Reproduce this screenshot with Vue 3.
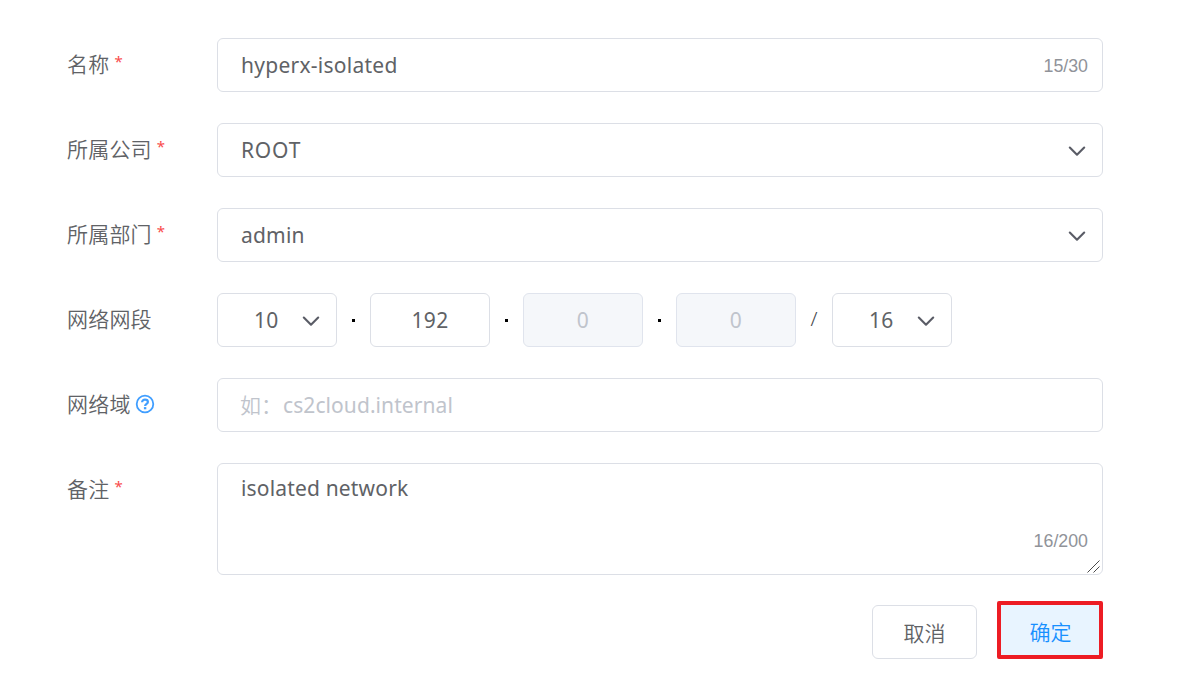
<script setup>
const octets = [
  { value: '10', select: true, sep: '.' },
  { value: '192', sep: '.' },
  { value: '0', disabled: true, sep: '.' },
  { value: '0', disabled: true, sep: '/' },
  { value: '16', select: true },
]
</script>

<template>
  <form class="form" @submit.prevent>
    <div class="row">
      <div class="label">名称<span class="req">*</span></div>
      <div class="field"><span class="value name">hyperx-isolated</span><span class="count">15/30</span></div>
    </div>
    <div class="row">
      <div class="label">所属公司<span class="req">*</span></div>
      <div class="field">
        <span class="value root">ROOT</span>
        <svg class="chevron" viewBox="0 0 18 12"><path d="M1.8 2.5 9 9.7 16.2 2.5" /></svg>
      </div>
    </div>
    <div class="row">
      <div class="label">所属部门<span class="req">*</span></div>
      <div class="field">
        <span class="value admin">admin</span>
        <svg class="chevron" viewBox="0 0 18 12"><path d="M1.8 2.5 9 9.7 16.2 2.5" /></svg>
      </div>
    </div>
    <div class="row">
      <div class="label">网络网段</div>
      <div class="segments">
        <template v-for="(o, i) in octets" :key="i">
          <div class="octet" :class="{ disabled: o.disabled, select: o.select }">
            <span class="value num">{{ o.value }}</span>
            <svg v-if="o.select" class="chevron" viewBox="0 0 18 12"><path d="M1.8 2.5 9 9.7 16.2 2.5" /></svg>
          </div>
          <span v-if="o.sep === '.'" class="dot"><i></i></span>
          <span v-else-if="o.sep" class="slash">/</span>
        </template>
      </div>
    </div>
    <div class="row">
      <div class="label">网络域
        <svg class="help" viewBox="0 0 20 20">
          <circle cx="10" cy="10" r="8.3" />
          <path class="hook" d="M7.1 8.2C7.1 6.5 8.4 5.7 10 5.7s2.9.9 2.9 2.3c0 1.8-2.8 1.9-2.8 3.9" />
          <rect x="8.9" y="13.1" width="2.4" height="2.2" />
        </svg>
      </div>
      <div class="field placeholder"><span class="ru">如：</span><span class="value domain">cs2cloud.internal</span></div>
    </div>
    <div class="row area-row">
      <div class="label">备注<span class="req">*</span></div>
      <div class="field area">
        <span class="value note">isolated network</span>
        <span class="count">16/200</span>
        <svg class="grip" viewBox="0 0 13 13"><path d="M.5 12.5 12.5.5M6.5 12.5l6-6" /></svg>
      </div>
    </div>
    <div class="actions">
      <button class="btn cancel" type="button">取消</button>
      <button class="btn ok" type="button">确定</button>
    </div>
  </form>
</template>

<style>
body { background: #fff; }
</style>

<style scoped>
.form {
  box-sizing: border-box;
  width: 1182px;
  height: 680px;
  padding: 38px 79px 0 67px;
  overflow: hidden;
  font-family: "Noto Sans", "Noto Sans CJK SC", sans-serif;
  font-size: 21px;
  color: #606266;
}
.form * { box-sizing: border-box; }
.row { display: flex; height: 54px; margin-bottom: 31px; }
.label {
  display: flex;
  align-items: center;
  width: 150px;
  height: 50px;
  line-height: 30px;
  white-space: nowrap;
  font-family: "Noto Sans CJK SC DemiLight", "Noto Sans CJK SC", sans-serif;
  font-weight: 350;
  letter-spacing: 0.2px;
}
.req {
  margin: -4px 0 0 5px;
  color: #f94b4b;
  font-family: "Noto Sans", sans-serif;
  font-weight: 400;
  font-size: 15px;
}
.field {
  display: flex;
  align-items: center;
  justify-content: space-between;
  width: 886px;
  height: 54px;
  padding: 0 14px 0 23px;
  border: 1px solid #dcdfe6;
  border-radius: 6px;
}
.value { line-height: 30px; white-space: nowrap; }
.name { letter-spacing: 0.26px; }
.root { letter-spacing: 0.8px; }
.admin { letter-spacing: 0.2px; }
.domain { letter-spacing: 0.08px; }
.note { letter-spacing: 0.17px; }
.num { letter-spacing: 0.3px; }
.count {
  margin-top: 2px;
  color: #909399;
  font-family: "Liberation Sans", sans-serif;
  font-size: 17.8px;
  line-height: 24px;
}
.chevron {
  width: 18px;
  height: 12px;
  margin: 2px 2px 0 0;
  fill: none;
  stroke: #5a5c66;
  stroke-width: 2.1;
  stroke-linecap: round;
  stroke-linejoin: round;
}
.segments { display: flex; }
.octet {
  display: flex;
  align-items: center;
  justify-content: center;
  width: 120px;
  height: 54px;
  border: 1px solid #dcdfe6;
  border-radius: 6px;
}
.octet.select { justify-content: space-between; padding: 0 16px 0 36px; }
.octet.select .chevron { margin-right: 0; }
.octet.disabled { background: #f5f7fa; border-color: #e0e4ed; color: #c0c4cc; }
.dot { display: flex; justify-content: center; width: 33px; padding-top: 26px; }
.dot i { width: 3px; height: 3px; background: #000; }
.slash { width: 36px; text-align: center; line-height: 52px; font-size: 20px; font-weight: 300; color: #45474b; }
.help { width: 20px; height: 20px; margin: 2px 0 0 4px; fill: none; stroke: #409eff; stroke-width: 1.8; }
.help .hook { stroke-width: 2.2; }
.help rect { fill: #409eff; stroke: none; }
.placeholder { justify-content: flex-start; color: #c0c4cc; }
.ru { width: 43px; margin: -2px 0 0 -1px; font-family: "Noto Sans CJK SC DemiLight", "Noto Sans CJK SC", sans-serif; font-weight: 350; line-height: 30px; white-space: nowrap; }
.area-row { height: 112px; margin-bottom: 26px; }
.area { position: relative; height: 112px; align-items: flex-start; padding-top: 9px; }
.area .count { margin-top: 56px; }
.grip { position: absolute; right: 2px; bottom: 1px; width: 13px; height: 13px; stroke: #4a4a4a; fill: none; }
.actions { display: flex; justify-content: flex-end; align-items: flex-start; gap: 20px; }
.btn {
  padding: 0;
  font-family: "Noto Sans CJK SC DemiLight", "Noto Sans CJK SC", sans-serif;
  font-size: 21px;
  font-weight: 350;
  line-height: 30px;
}
.cancel { width: 105px; height: 54px; margin-top: 4px; background: #fff; color: #606266; border: 1px solid #dcdfe6; border-radius: 6px; }
.ok { width: 106px; height: 58px; padding: 2px 0 0 1px; background: #e8f4ff; color: #1890ff; border: 4px solid #ed1c24; border-radius: 2px; }
</style>
